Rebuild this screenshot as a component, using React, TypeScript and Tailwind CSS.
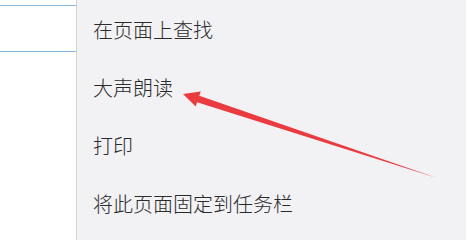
const ITEMS = ["在页面上查找", "大声朗读", "打印", "将此页面固定到任务栏"];

export default function App() {
  return (
    <div
      className="relative flex w-[473px] h-[247px] bg-white overflow-hidden"
      style={{ fontFamily: '"Noto Sans CJK SC", "Noto Sans", sans-serif' }}
    >
      {/* address box on the left, cut off by the menu */}
      <div className="w-[76px] shrink-0">
        <div className="mt-[5px] h-[47px] border-y border-[#86b4da] bg-white" />
      </div>

      {/* context menu */}
      <div className="w-[390px] h-[240px] shrink-0 bg-[#f2f1f4] border-l border-[#d4d4d6] pt-px">
        {ITEMS.map((t) => (
          <div key={t} className="h-[58px] flex items-center pl-[16px] text-[20px] font-light leading-none text-[#2a2a2a]">
            {t}
          </div>
        ))}
      </div>

      {/* red annotation arrow */}
      <svg className="absolute left-0 top-0 pointer-events-none" width="473" height="247" viewBox="0 0 473 247">
        <polygon
          points="183,94 200.7,91.4 199.3,95.7 437,178 197.1,102.3 195.7,106.6"
          fill="#ea3b40"
        />
      </svg>
    </div>
  );
}
